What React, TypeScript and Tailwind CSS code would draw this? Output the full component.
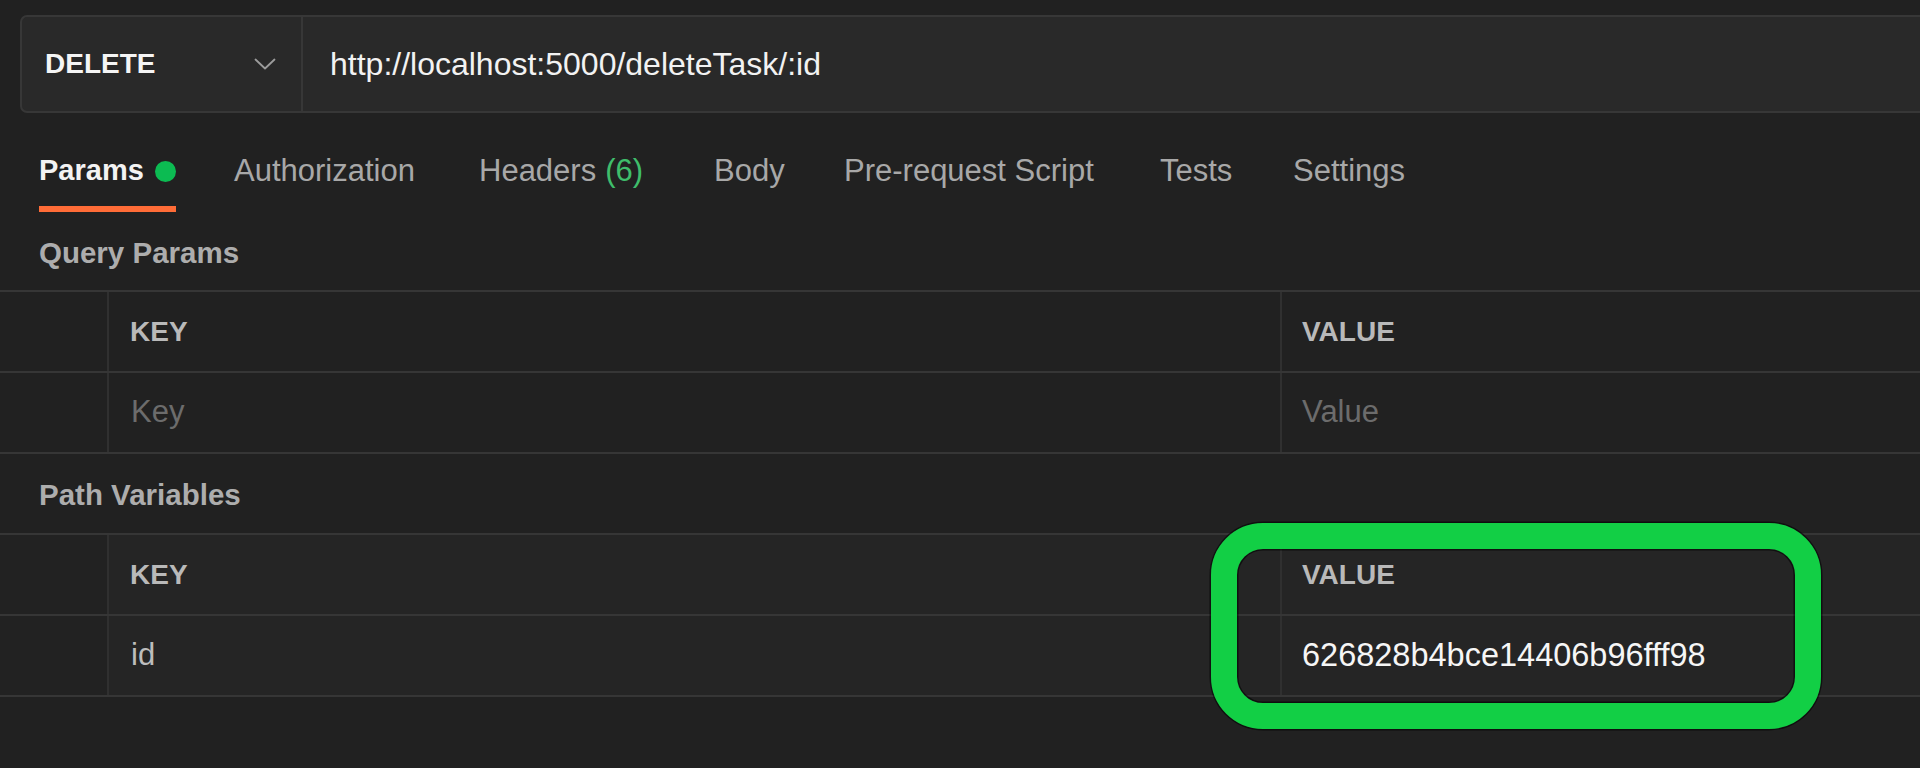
import React from 'react'

const tabs = [
  { label: 'Params', w: 'w-[195px]' },
  { label: 'Authorization', w: 'w-[245px]' },
  { label: 'Headers', w: 'w-[235px]' },
  { label: 'Body', w: 'w-[130px]' },
  { label: 'Pre-request Script', w: 'w-[316px]' },
  { label: 'Tests', w: 'w-[133px]' },
  { label: 'Settings', w: 'w-[200px]' },
]

const Chevron = () => (
  <svg width="22" height="12" viewBox="0 0 22 12" fill="none">
    <polyline points="1.5,1.5 11,10.5 20.5,1.5" stroke="#9c9c9c" strokeWidth="1.8" strokeLinecap="round" strokeLinejoin="round" />
  </svg>
)

const RequestBar = () => (
  <div className="pt-[15px] pl-[20px]">
    <div className="flex h-[98px] rounded-l-[7px] border-2 border-r-0 border-[#373737] bg-[#292929]">
      <div className="flex w-[281px] shrink-0 items-center justify-between border-r-2 border-[#373737] pl-[23px] pr-[25px]">
        <span className="text-[28px] font-bold text-[#f5f5f5]">DELETE</span>
        <Chevron />
      </div>
      <div className="flex items-center pl-[27px] text-[32px] text-[#f2f2f2]">http://localhost:5000/deleteTask/:id</div>
    </div>
  </div>
)

const TabBar = () => (
  <div className="mt-[38px] flex h-[61px] items-start pl-[39px]">
    {tabs.map((t) =>
      t.label === 'Params' ? (
        <div key={t.label} className={`${t.w} shrink-0`}>
          <div className="inline-flex flex-col">
            <div className="flex h-[40px] items-center">
              <span className="text-[29px] font-bold text-[#f3f3f3]">Params</span>
              <span className="ml-[11px] h-[21px] w-[21px] rounded-full bg-[#0cbb52]" />
            </div>
            <div className="mt-[15px] h-[6px] bg-[#ff6c37]" />
          </div>
        </div>
      ) : (
        <div key={t.label} className={`${t.w} flex h-[40px] shrink-0 items-center text-[31px] text-[#a8a8a8]`}>
          {t.label}
          {t.label === 'Headers' && <span className="ml-[9px] text-[#3fbd6b]">(6)</span>}
        </div>
      )
    )}
  </div>
)

type Row = { key: string; value: string; filled?: boolean }

const ParamTable = ({ rows, tint }: { rows: Row[]; tint?: boolean }) => (
  <div className={`border-t-2 border-[#363636] ${tint ? 'bg-[#252525]' : ''}`}>
    <div className="flex h-[81px] border-b-2 border-[#363636]">
      <div className={`w-[109px] shrink-0 border-r-2 border-[#303030] ${tint ? 'bg-[#222222]' : ''}`} />
      <div className="flex w-[1173px] shrink-0 items-center border-r-2 border-[#303030] pl-[21px] text-[28px] font-bold text-[#b9b9b9]">KEY</div>
      <div className="flex flex-1 items-center pl-[20px] text-[28px] font-bold text-[#b9b9b9]">VALUE</div>
    </div>
    {rows.map((r, i) => (
      <div key={i} className="flex h-[81px] border-b-2 border-[#363636]">
        <div className={`w-[109px] shrink-0 border-r-2 border-[#303030] ${tint ? 'bg-[#222222]' : ''}`} />
        <div className={`flex w-[1173px] shrink-0 items-center border-r-2 border-[#303030] pl-[22px] text-[31px] ${r.filled ? 'text-[#bdbdbd]' : 'text-[#6c6c6c]'}`}>
          {r.key}
        </div>
        <div className={`flex flex-1 items-center pl-[20px] ${r.filled ? 'text-[32.5px] text-[#f6f6f6]' : 'text-[31px] text-[#6c6c6c]'}`}>
          {r.value}
        </div>
      </div>
    ))}
  </div>
)

const SectionTitle = ({ children, h }: { children: React.ReactNode; h: string }) => (
  <div className={`${h} flex items-center pl-[39px] pt-[4px] text-[29.5px] font-bold text-[#adadad]`}>{children}</div>
)

export default function App() {
  return (
    <div className="relative h-[768px] w-full overflow-hidden bg-[#212121]" style={{ fontFamily: '"Liberation Sans", Arial, sans-serif' }}>
      <RequestBar />
      <TabBar />
      <SectionTitle h="h-[78px]">Query Params</SectionTitle>
      <ParamTable rows={[{ key: 'Key', value: 'Value' }]} />
      <SectionTitle h="h-[79px]">Path Variables</SectionTitle>
      <ParamTable tint rows={[{ key: 'id', value: '626828b4bce14406b96fff98', filled: true }]} />

      {/* annotation ring */}
      <div className="pointer-events-none absolute left-[1211px] top-[523px] h-[206px] w-[610px] rounded-[52px] border-[26px] border-[#12cf45] shadow-[0_0_0_1.5px_rgba(0,0,0,0.55),inset_0_0_0_1.5px_rgba(0,0,0,0.55)]" />
    </div>
  )
}
